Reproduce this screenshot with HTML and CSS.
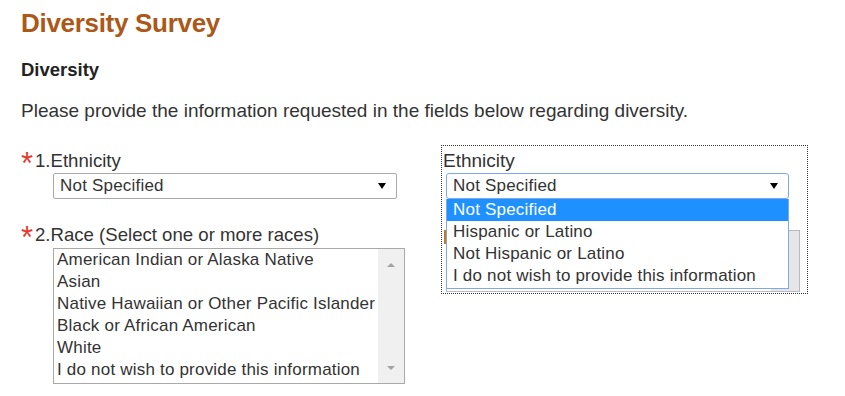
FILE: index.html
```html
<!DOCTYPE html>
<html lang="en">

<head>
    <meta charset="UTF-8" />
    <meta name="viewport" content="width=device-width, initial-scale=1.0" />
    <title>Diversity Survey</title>
    <link rel="stylesheet" href="styles.css">
</head>

<body>
    <main class="survey">
        <h1 class="title">Diversity Survey</h1>
        <h2 class="section">Diversity</h2>
        <p class="intro">Please provide the information requested in the fields below regarding diversity.</p>

        <div class="columns">
            <div class="questions">
                <div class="field">
                    <label class="q-label"><span class="req">*</span>1.Ethnicity</label>
                    <div class="select">
                        <span>Not Specified</span>
                        <span class="arrow"></span>
                    </div>
                </div>

                <div class="field race">
                    <label class="q-label"><span class="req">*</span>2.Race (Select one or more races)</label>
                    <div class="listbox">
                        <ul class="options">
                            <li>American Indian or Alaska Native</li>
                            <li>Asian</li>
                            <li>Native Hawaiian or Other Pacific Islander</li>
                            <li>Black or African American</li>
                            <li>White</li>
                            <li>I do not wish to provide this information</li>
                        </ul>
                        <div class="scrollbar">
                            <span class="sb-up"></span>
                            <span class="sb-down"></span>
                        </div>
                    </div>
                </div>
            </div>

            <div class="zoom-panel">
                <label class="z-label">Ethnicity</label>
                <div class="select focused">
                    <span>Not Specified</span>
                    <span class="arrow"></span>
                </div>
                <div class="behind">
                    <span class="mark"></span>
                    <div class="listbox-stub">
                        <div class="scrollbar"></div>
                    </div>
                </div>
                <ul class="dropdown">
                    <li class="active">Not Specified</li>
                    <li>Hispanic or Latino</li>
                    <li>Not Hispanic or Latino</li>
                    <li>I do not wish to provide this information</li>
                </ul>
            </div>
        </div>
    </main>
</body>

</html>
```

FILE: styles.css
```css
body {
    margin: 0;
    background: #fff;
    color: #333;
    font-family: "Liberation Sans", Arial, sans-serif;
    font-size: 19px;
}

.survey {
    padding: 8px 0 0 21px;
}

.title {
    margin: 0;
    font-size: 26px;
    line-height: 30px;
    letter-spacing: -0.3px;
    color: #ab5818;
}

.section {
    margin: 21px 0 0;
    font-size: 18.5px;
    line-height: 22px;
    color: #222;
}

.intro {
    margin: 19px 0 0;
    line-height: 22px;
}

.columns {
    display: flex;
    margin-top: 23px;
}

.questions {
    width: 420px;
    padding-top: 5px;
}

.q-label {
    display: block;
    line-height: 22px;
    white-space: nowrap;
    font-size: 18.6px;
}

.req {
    display: inline-block;
    width: 14px;
    color: #e63a2e;
    font-size: 31px;
    font-weight: 300;
    line-height: 0;
    vertical-align: -7px;
}

.select {
    display: flex;
    justify-content: space-between;
    align-items: center;
    width: 344px;
    height: 26px;
    box-sizing: border-box;
    margin: 1px 0 0 32px;
    padding: 0 10px 0 6px;
    border: 1px solid #a9a9a9;
    border-radius: 2px;
    font-size: 17px;
    letter-spacing: 0.2px;
}

.arrow {
    width: 0;
    height: 0;
    border-left: 4px solid transparent;
    border-right: 4px solid transparent;
    border-top: 6px solid #000;
}

.race {
    margin-top: 25px;
}

.listbox {
    display: flex;
    width: 352px;
    height: 136px;
    box-sizing: border-box;
    margin: 2px 0 0 32px;
    border: 1px solid #a9a9a9;
}

.options {
    flex: 1;
    list-style: none;
    margin: 0;
    padding: 0 0 0 3px;
    font-size: 17px;
    letter-spacing: 0.2px;
}

.options li {
    line-height: 22px;
    white-space: nowrap;
}

.scrollbar {
    position: relative;
    width: 26px;
    background: #f0f0f0;
}

.sb-up,
.sb-down {
    position: absolute;
    left: 9px;
    width: 0;
    height: 0;
    border-left: 4px solid transparent;
    border-right: 4px solid transparent;
}

.sb-up {
    top: 14px;
    border-bottom: 4px solid #a3a3a3;
}

.sb-down {
    bottom: 13px;
    border-top: 4px solid #a3a3a3;
}

/* zoomed-in view of the open dropdown */
.zoom-panel {
    position: relative;
    width: 367px;
    height: 149px;
    box-sizing: border-box;
    padding: 4px 0 0 1px;
    border: 1px dotted #333;
    overflow: hidden;
}

.z-label {
    display: block;
    line-height: 22px;
}

.zoom-panel .select {
    width: 343px;
    margin: 1px 0 0 3px;
}

.focused {
    border-color: #7ea9e6;
    border-radius: 3px;
}

.behind {
    display: flex;
    margin-top: 31px;
}

.mark {
    width: 2px;
    height: 14px;
    margin: 0 0 0 1px;
    background: #c2772f;
}

.listbox-stub {
    display: flex;
    justify-content: flex-end;
    width: 352px;
    height: 60px;
    border: 1px solid #bbb;
}

.listbox-stub .scrollbar {
    width: 28px;
    background: #e6e6e6;
}

.dropdown {
    position: absolute;
    top: 53px;
    left: 4px;
    width: 343px;
    box-sizing: border-box;
    list-style: none;
    margin: 0;
    padding: 0 0 1px;
    background: #fff;
    border: 1px solid #7ea9e6;
    border-top: none;
    font-size: 17px;
    letter-spacing: 0.2px;
}

.dropdown li {
    line-height: 22px;
    padding-left: 6px;
    white-space: nowrap;
}

.dropdown .active {
    background: #1e90ff;
    color: #fff;
}
```
